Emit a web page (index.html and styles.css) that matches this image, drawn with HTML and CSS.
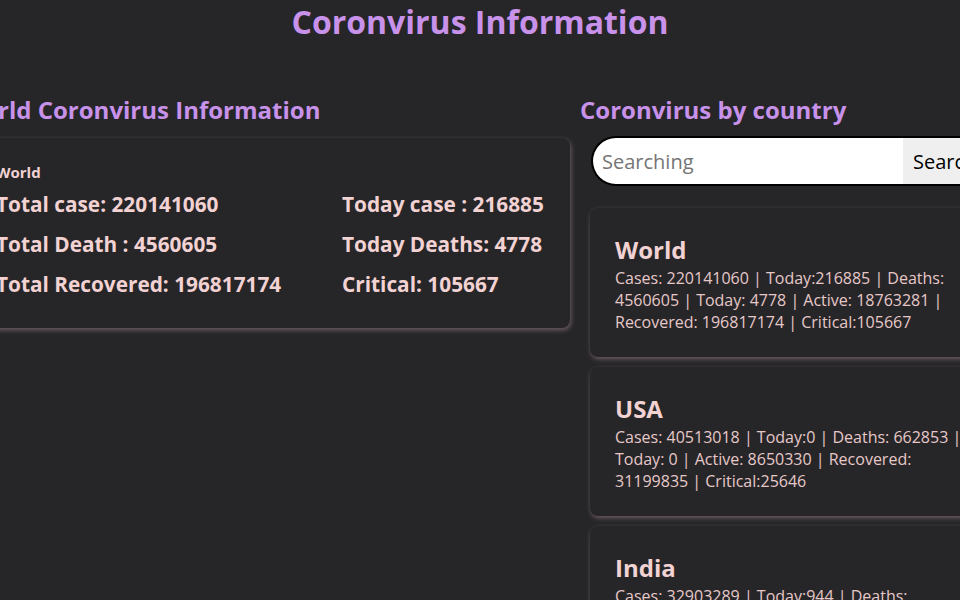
FILE: index.html
```html
<!DOCTYPE html>
<html>
<head>
<meta charset="utf-8">
<link rel="stylesheet" href="styles.css">
</head>
<body>
<h1 class="title">Coronvirus Information</h1>
<main class="layout">
  <section class="col-left">
    <h2 class="section-title">World Coronvirus Information</h2>
    <div class="world-card">
      <div class="world-label">World</div>
      <div class="world-grid">
        <div class="stat">Total case: 220141060</div>
        <div class="stat">Today case : 216885</div>
        <div class="stat">Total Death : 4560605</div>
        <div class="stat">Today Deaths: 4778</div>
        <div class="stat">Total Recovered: 196817174</div>
        <div class="stat">Critical: 105667</div>
      </div>
    </div>
  </section>
  <section class="col-right">
    <h2 class="section-title section-title-right">Coronvirus by country</h2>
    <form class="search">
      <input class="search-input" type="text" placeholder="Searching">
      <button class="search-btn" type="button">Search</button>
    </form>
    <div class="country-list">
      <div class="country-card">
        <h3 class="country-name">World</h3>
        <p class="country-text">Cases: 220141060 | Today:216885 | Deaths: 4560605 | Today: 4778 | Active: 18763281 | Recovered: 196817174 | Critical:105667</p>
      </div>
      <div class="country-card">
        <h3 class="country-name">USA</h3>
        <p class="country-text">Cases: 40513018 | Today:0 | Deaths: 662853 | Today: 0 | Active: 8650330 | Recovered: 31199835 | Critical:25646</p>
      </div>
      <div class="country-card">
        <h3 class="country-name">India</h3>
        <p class="country-text">Cases: 32903289 | Today:944 | Deaths: 440225 | Today: 0 | Active: 363605 | Recovered: 32099459 | Critical:8944</p>
      </div>
    </div>
  </section>
</main>
</body>
</html>
```
FILE: styles.css
```css
html, body {
  margin: 0;
  padding: 0;
  background: #262628;
  overflow: hidden;
}
body {
  font-family: "Open Sans", "Noto Sans", sans-serif;
  color: #f2d2d2;
  width: 960px;
  height: 600px;
}
.title {
  margin: 0;
  text-align: center;
  color: #c891ea;
  font-size: 32px;
  font-weight: 700;
  line-height: 44px;
}
.layout {
  display: flex;
  justify-content: center;
  gap: 10px;
  margin-top: 50px;
}
.col-left {
  flex: 0 0 610px;
}
.col-right {
  flex: 0 0 420px;
}
.section-title {
  margin: 0 0 12px;
  color: #c891ea;
  font-size: 24px;
  font-weight: 700;
  line-height: 32px;
}
.section-title-right {
  margin-bottom: 10px;
}
.world-card {
  margin-left: 12px;
  border-radius: 8px;
  box-shadow: 1px 2px 5px rgba(120, 100, 105, 0.9);
  padding: 22px 24px 30px;
}
.world-label {
  font-size: 15px;
  font-weight: 700;
  line-height: 24px;
  margin-bottom: 6px;
}
.world-grid {
  display: grid;
  grid-template-columns: 346px 1fr;
  row-gap: 12px;
}
.stat {
  font-size: 20.8px;
  font-weight: 700;
  line-height: 28px;
}
.search {
  display: flex;
  margin: 0 0 22px 11px;
  height: 50px;
}
.search-input {
  box-sizing: border-box;
  width: 312px;
  height: 50px;
  border: 2px solid #000;
  border-right: none;
  border-radius: 25px 0 0 25px;
  background: #fff;
  font-family: "Open Sans", sans-serif;
  font-size: 20px;
  padding: 0 0 0 9px;
  outline: none;
}
.search-input::placeholder {
  color: #757575;
}
.search-btn {
  box-sizing: border-box;
  height: 50px;
  border: 2px solid #000;
  border-left: none;
  background: #efefef;
  font-family: "Open Sans", sans-serif;
  font-size: 20px;
  color: #000;
  padding: 0 10px;
}
.country-list {
  display: flex;
  flex-direction: column;
  gap: 10px;
  margin-left: 10px;
}
.country-card {
  border-radius: 8px;
  box-shadow: 1px 2px 5px rgba(120, 100, 105, 0.9);
  padding: 25px 25px 24px;
}
.country-name {
  margin: 0;
  font-size: 24px;
  font-weight: 700;
  line-height: 34px;
}
.country-text {
  margin: 0;
  font-size: 16px;
  line-height: 22px;
  color: #e6c8c8;
  width: 348px;
}
```
